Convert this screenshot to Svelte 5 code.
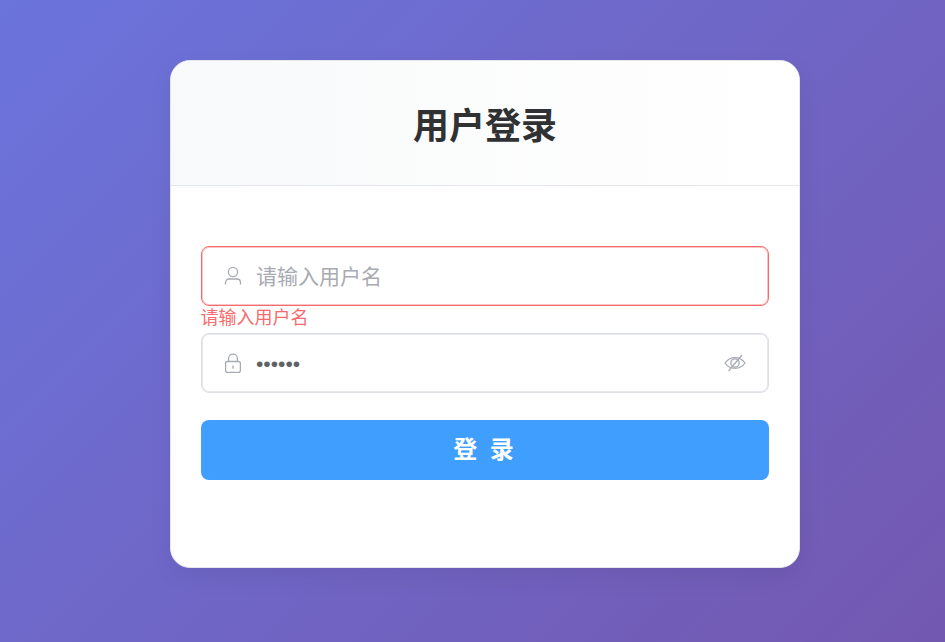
<script lang="ts">
	let username = $state('');
	let password = $state('123456');
	let showPassword = $state(false);
	let touched = $state(true);

	let usernameError = $derived(touched && !username ? '请输入用户名' : '');

	function submit(e: Event) {
		e.preventDefault();
		touched = true;
	}
</script>

<div class="page">
	<div class="login-card">
		<div class="card-header">
			<h1>用户登录</h1>
		</div>
		<form class="login-form" onsubmit={submit}>
			<div class="field" class:invalid={usernameError}>
				<svg class="field-icon" width="20" height="20" viewBox="0 0 20 20" fill="none" stroke="currentColor" stroke-width="1.3">
					<circle cx="10" cy="6" r="4.6"/>
					<path d="M2.500 18.600v-1.800c0-2.200 1.500-3.800 3.600-3.800h7.800c2.100 0 3.600 1.600 3.600 3.800v1.800"/>
				</svg>
				<input type="text" placeholder="请输入用户名" bind:value={username} />
			</div>
			{#if usernameError}
				<div class="field-error">{usernameError}</div>
			{/if}

			<div class="field password">
				<svg class="field-icon" width="20" height="20" viewBox="0 0 20 20" fill="none" stroke="currentColor" stroke-width="1.3">
					<rect x="2.600" y="8.500" width="14.800" height="11" rx="2"/>
					<path d="M5.600 8.500V5.500a4.400 4.400 0 0 1 8.800 0v3"/>
					<path d="M10 12.500v3.200"/>
				</svg>
				<input type={showPassword ? 'text' : 'password'} bind:value={password} />
				<button type="button" class="eye" aria-label="显示密码" onclick={() => (showPassword = !showPassword)}>
					<svg width="22" height="22" viewBox="0 0 22 22" fill="none" stroke="currentColor" stroke-width="1.300">
						<path d="M1 11c2.500-3.600 5.800-5.400 10-5.400S18.500 7.400 21 11c-2.500 3.600-5.800 5.400-10 5.400S3.500 14.600 1 11z"/>
						<circle cx="11" cy="11" r="4.200"/>
						<path d="M18 3L4.500 19"/>
					</svg>
				</button>
			</div>

			<button type="submit" class="submit">登 录</button>
		</form>
	</div>
</div>

<style>
	:global(body) {
		margin: 0;
		font-family: "Liberation Sans", "Noto Sans CJK SC", sans-serif;
	}

	.page {
		box-sizing: border-box;
		height: 642px;
		padding: 60px 145px 0 170px;
		background: linear-gradient(135deg, #6b74dc 0%, #7358b0 100%);
		overflow: hidden;
	}

	.login-card {
		box-sizing: border-box;
		height: 508px;
		background: #fff;
		border: 1px solid #e4e7ed;
		border-radius: 20px;
		overflow: hidden;
		box-shadow: 0 8px 24px rgba(0, 0, 0, 0.06);
	}

	.card-header {
		box-sizing: border-box;
		height: 125px;
		display: flex;
		align-items: center;
		justify-content: center;
		background: linear-gradient(90deg, #f8f9fa 0%, #fff 100%);
		border-bottom: 1px solid #e4e7ed;
	}

	h1 {
		margin: 0;
		font-size: 36px;
		font-weight: 700;
		color: #303133;
	}

	.login-form {
		display: flex;
		flex-direction: column;
		padding: 60px 30px 0;
	}

	.field {
		box-sizing: border-box;
		height: 60px;
		display: flex;
		align-items: center;
		padding: 0 22px 0 21px;
		border: 1px solid #dcdfe6;
		border-radius: 8px;
		background: #fff;
		box-shadow: inset 0 0 0 1px #e6e8ed;
		color: #a8abb2;
	}

	.field.invalid {
		border-color: #f56c6c;
		box-shadow: inset 0 0 0 1px #fbc4c4;
	}

	.field-icon {
		flex-shrink: 0;
		margin-right: 13px;
	}

	input {
		box-sizing: border-box;
		flex: 1;
		min-width: 0;
		height: 100%;
		padding: 1px 0 0;
		border: 0;
		outline: 0;
		background: transparent;
		font: inherit;
		font-size: 21px;
		color: #606266;
	}

	input::placeholder {
		color: #a8abb2;
	}

	.eye {
		display: flex;
		padding: 0;
		border: 0;
		background: none;
		color: #a8abb2;
		cursor: pointer;
	}

	.field-error {
		height: 27px;
		margin-left: -0.5px;
		font-size: 18px;
		line-height: 24px;
		color: #f56c6c;
	}

	.submit {
		height: 60px;
		margin-top: 27px;
		padding: 0 0 6px;
		border: 0;
		border-radius: 8px;
		background: #409eff;
		color: #fff;
		font: inherit;
		font-size: 24px;
		font-weight: 700;
		letter-spacing: 3px;
		cursor: pointer;
	}
</style>
